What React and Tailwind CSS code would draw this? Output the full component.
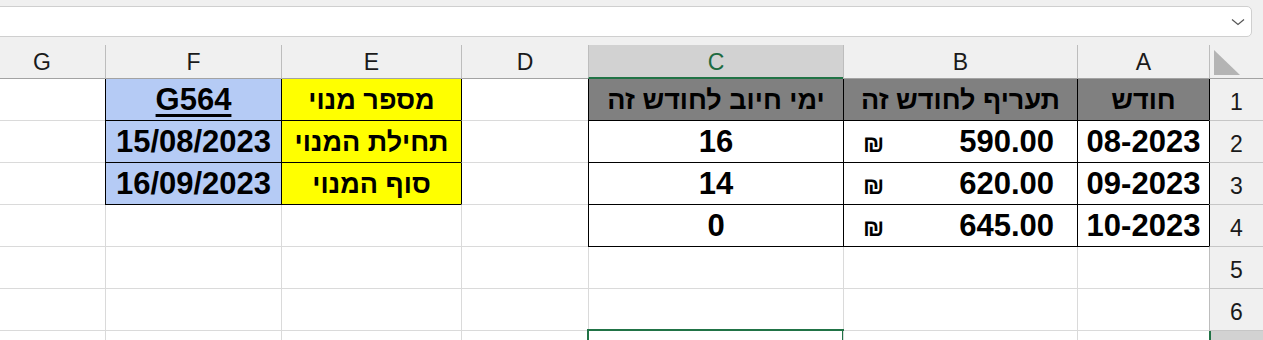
import React from "react";

const FONT = "font-['Liberation_Sans','DejaVu_Sans',sans-serif]";

const COLS = ["G", "F", "E", "D", "C", "B", "A"];
const WIDTHS = [
  "w-[105px]",
  "w-[176px]",
  "w-[180px]",
  "w-[127px]",
  "w-[255px]",
  "w-[234px]",
  "w-[132px]",
];

const rows = [
  [
    {},
    { t: "G564", bg: "blue", black: true, u: true },
    { t: "מספר מנוי", bg: "yellow", black: true, he: true },
    { blackLeft: true },
    { t: "ימי חיוב לחודש זה", bg: "gray", black: true, he: true },
    { t: "תעריף לחודש זה", bg: "gray", black: true, he: true },
    { t: "חודש", bg: "gray", black: true, he: true },
  ],
  [
    {},
    { t: "15/08/2023", bg: "blue", black: true },
    { t: "תחילת המנוי", bg: "yellow", black: true, he: true },
    { blackLeft: true },
    { t: "16", black: true },
    { money: "590.00", black: true },
    { t: "08-2023", black: true },
  ],
  [
    {},
    { t: "16/09/2023", bg: "blue", black: true },
    { t: "סוף המנוי", bg: "yellow", black: true, he: true },
    { blackLeft: true },
    { t: "14", black: true },
    { money: "620.00", black: true },
    { t: "09-2023", black: true },
  ],
  [
    {},
    {},
    {},
    {},
    { t: "0", black: true },
    { money: "645.00", black: true },
    { t: "10-2023", black: true },
  ],
  [{}, {}, {}, {}, {}, {}, {}],
  [{}, {}, {}, {}, {}, {}, {}],
  [{}, {}, {}, {}, { sel: true }, {}, {}],
];

function Cell({ c, i }) {
  const w = WIDTHS[i];
  const left =
    i === 0
      ? ""
      : c.black || c.blackLeft
      ? "border-l border-l-black"
      : "border-l border-l-[#dadada]";
  const bottom = c.black ? "border-b border-b-black" : "border-b border-b-[#dadada]";
  const bg =
    c.bg === "blue"
      ? "bg-[#b5cbf5]"
      : c.bg === "yellow"
      ? "bg-[#ffff00]"
      : c.bg === "gray"
      ? "bg-[#808080]"
      : "bg-white";
  return (
    <div
      className={`${w} h-[42px] shrink-0 box-border relative ${left} ${bottom} ${bg} flex items-end pb-[5px] font-bold leading-none text-black`}
    >
      {c.t && (
        <div
          dir={c.he ? "rtl" : "ltr"}
          className={`w-full text-center whitespace-nowrap ${
            c.he ? "text-[27px] mb-[1px]" : "text-[31px]"
          } ${c.u ? "underline decoration-[3px] underline-offset-[4px]" : ""}`}
        >
          {c.t}
        </div>
      )}
      {c.money && (
        <div className="w-full flex justify-between items-end pl-[19px] pr-[23px] text-[31px]">
          <span className="text-[24px] mb-[1px]">₪</span>
          <span>{c.money}</span>
        </div>
      )}
      {c.sel && (
        <div className="absolute left-[-2px] top-[-2px] w-[257px] h-[30px] border-2 border-[#217346]" />
      )}
    </div>
  );
}

export default function App() {
  return (
    <div className={`w-[1263px] h-[340px] overflow-hidden bg-[#f0f0f0] ${FONT}`}>
      {/* formula bar */}
      <div className="h-[45px] pt-[6px] pr-[11px]">
        <div className="h-[31px] ml-[-10px] bg-white border border-[#cfcfcf] rounded-[5px] flex items-center justify-end pr-[6px]">
          <svg width="14" height="8" viewBox="0 0 14 8" fill="none">
            <path d="M1 1.5 L7 6.5 L13 1.5" stroke="#555" strokeWidth="1.2" />
          </svg>
        </div>
      </div>
      {/* column header */}
      <div className="flex h-[34px]">
        {COLS.map((l, i) => {
          const selected = l === "C";
          return (
            <div
              key={l}
              className={`${WIDTHS[i]} shrink-0 box-border h-[34px] flex items-center justify-center text-[23px] ${
                i === 0 ? "pr-[21px]" : "border-l border-l-[#bdbdbd]"
              } ${
                selected
                  ? "bg-[#d2d2d2] text-[#1d6b41] border-b-2 border-b-[#217346]"
                  : "bg-[#f0f0f0] text-[#1a1a1a] border-b border-b-[#a3a3a3]"
              }`}
            >
              <span className="mt-[2px]">{l}</span>
            </div>
          );
        })}
        <div className="w-[54px] shrink-0 box-border h-[34px] border-l border-l-[#bdbdbd] border-b border-b-[#a3a3a3] bg-[#f0f0f0] relative">
          <svg className="absolute left-[4px] top-[5px]" width="26" height="25" viewBox="0 0 26 25">
            <polygon points="0,0 0,25 26,25" fill="#b4b4b4" />
          </svg>
        </div>
      </div>
      {/* rows */}
      {rows.map((r, ri) => {
        const n = ri + 1;
        const selRow = n === 7;
        const rhLeft =
          ri < 4
            ? "border-l border-l-black"
            : selRow
            ? "border-l-2 border-l-[#217346]"
            : "border-l border-l-[#bdbdbd]";
        return (
          <div key={ri} className="flex h-[42px]">
            {r.map((c, i) => (
              <Cell key={i} c={c} i={i} />
            ))}
            <div
              className={`w-[54px] shrink-0 box-border h-[42px] ${rhLeft} border-b border-b-[#c6c6c6] ${
                selRow ? "bg-[#d2d2d2]" : "bg-[#f0f0f0]"
              } flex items-end justify-center pb-[6px] text-[23px] leading-none text-[#1a1a1a]`}
            >
              {selRow ? "" : n}
            </div>
          </div>
        );
      })}
    </div>
  );
}
